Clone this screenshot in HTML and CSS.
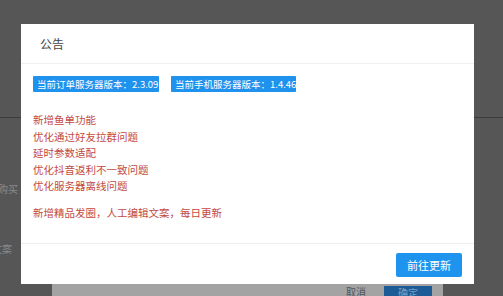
FILE: index.html
```html
<!DOCTYPE html>
<html lang="zh">
<head>
<meta charset="utf-8">
<link rel="stylesheet" href="styles.css">
</head>
<body>
<div class="page">
  <div class="page-top"></div>
  <div class="page-row first">购买</div>
  <div class="page-row second">文案</div>
</div>

<div class="back-dialog">
  <div class="back-footer">
    <span class="back-cancel">取消</span>
    <span class="back-ok">确定</span>
  </div>
</div>

<div class="modal">
  <div class="modal-header">公告</div>
  <div class="modal-body">
    <div class="tags">
      <span class="tag">当前订单服务器版本：2.3.09</span>
      <span class="tag">当前手机服务器版本：1.4.46</span>
    </div>
    <ul class="notes">
      <li>新增鱼单功能</li>
      <li>优化通过好友拉群问题</li>
      <li>延时参数适配</li>
      <li>优化抖音返利不一致问题</li>
      <li>优化服务器离线问题</li>
      <li class="gap">新增精品发圈，人工编辑文案，每日更新</li>
    </ul>
  </div>
  <div class="modal-footer">
    <button class="btn-primary">前往更新</button>
  </div>
</div>
</body>
</html>
```
FILE: styles.css
```css
* { box-sizing: border-box; }
html, body {
  margin: 0;
  padding: 0;
  width: 503px;
  height: 296px;
  overflow: hidden;
}
body {
  background: #565656;
  font-family: "Noto Sans CJK SC", "Liberation Sans", sans-serif;
  position: relative;
}
.page {
  display: flex;
  flex-direction: column;
  height: 296px;
  overflow: hidden;
}
.page-top {
  height: 118px;
  border-bottom: 1px solid #3c3c3c;
}
.page-row {
  font-size: 10px;
  color: #8a8a8a;
  line-height: 14px;
}
.page-row.first { margin-top: 64px; margin-left: -2px; }
.page-row.second { margin-top: 46px; margin-left: -8px; }

.back-dialog {
  position: absolute;
  left: 52px;
  top: 260px;
  width: 391px;
  height: 36px;
  background: #a3a3a3;
  overflow: hidden;
}
.back-footer {
  display: flex;
  justify-content: flex-end;
  align-items: flex-start;
  gap: 18px;
  padding: 26px 11px 0 0;
}
.back-cancel {
  font-size: 10px;
  line-height: 12px;
  color: #555;
}
.back-ok {
  width: 48px;
  height: 10px;
  background: #1d5b97;
  color: #7d9dbf;
  font-size: 10px;
  line-height: 14px;
  text-align: center;
}

.modal {
  position: absolute;
  left: 21px;
  top: 24px;
  width: 453px;
  height: 260px;
  background: #fff;
  display: flex;
  flex-direction: column;
}
.modal-header {
  height: 40px;
  padding-left: 19px;
  display: flex;
  align-items: center;
  font-size: 12px;
  color: #444;
  border-bottom: 1px solid #f0f0f0;
}
.modal-body {
  padding: 12px 12px 0 12px;
  flex: 1;
  border-bottom: 1px solid #eeeeee;
}
.tags {
  display: flex;
  gap: 12px;
}
.tag {
  background: #1f92ee;
  color: #fff;
  font-size: 9.5px;
  height: 16px;
  line-height: 16px;
  padding: 0 4px;
  width: 126px;
  white-space: nowrap;
  border-radius: 1px;
}
.tag + .tag { width: 125px; }
.notes {
  list-style: none;
  margin: 20px 0 0 0;
  padding: 0;
  color: #c34a40;
  font-size: 10.5px;
  line-height: 16.5px;
}
.notes li.gap { margin-top: 10px; }
.modal-footer {
  display: flex;
  justify-content: flex-end;
  padding: 9px 12px 7px 0;
}
.btn-primary {
  width: 66px;
  height: 24px;
  border: none;
  border-radius: 2px;
  background: #1f94ef;
  color: #fff;
  font-family: "Noto Sans CJK SC", "Liberation Sans", sans-serif;
  font-size: 11px;
  padding: 0;
}
```
